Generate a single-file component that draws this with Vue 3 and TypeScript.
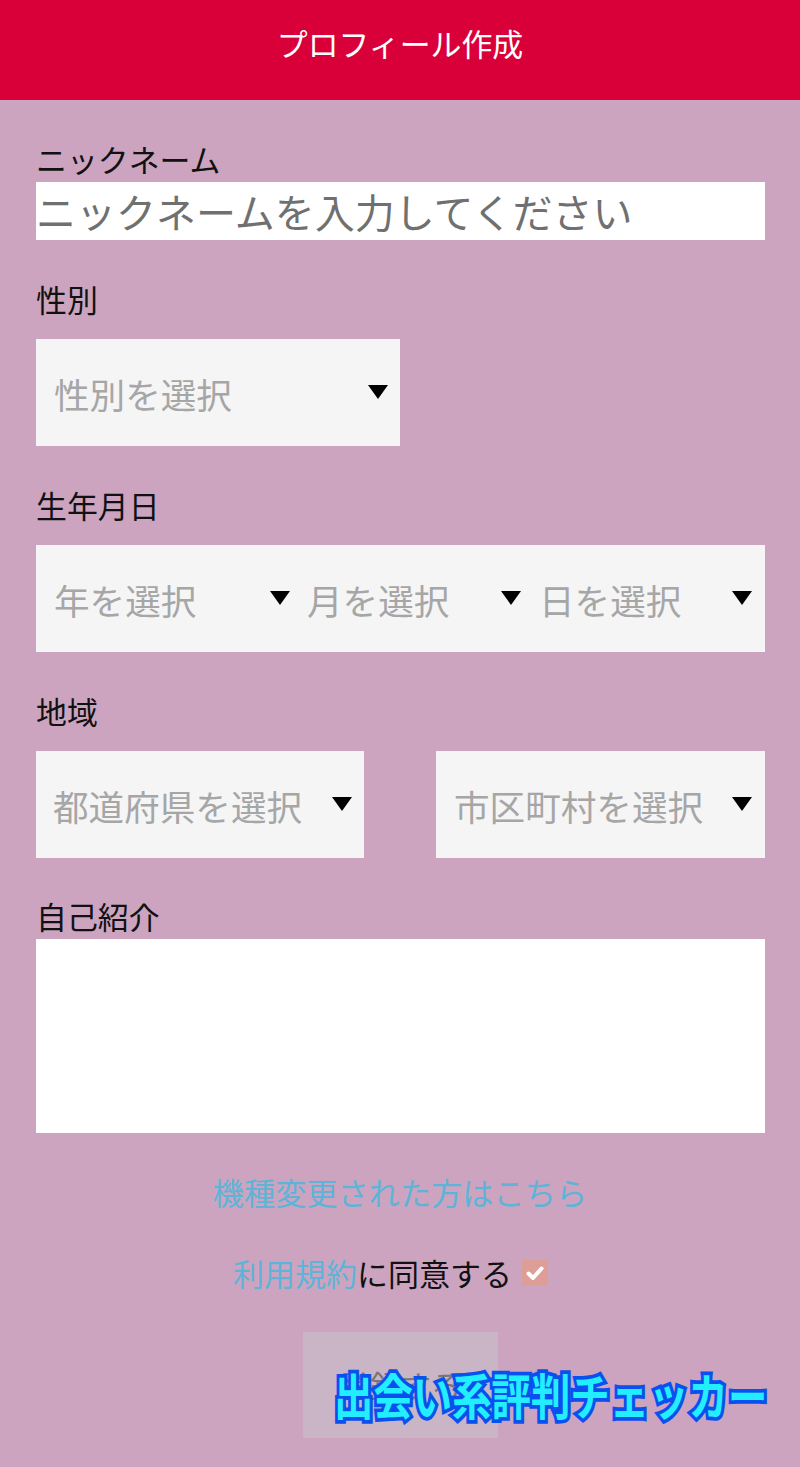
<script setup lang="ts">
const dateParts = [
  { text: '年を選択', cls: 'year' },
  { text: '月を選択', cls: 'month' },
  { text: '日を選択', cls: 'day' },
]
</script>

<template>
  <div class="page">
    <header class="bar">プロフィール作成</header>
    <main class="form">
      <section class="first">
        <div class="label">ニックネーム</div>
        <div class="input">ニックネームを入力してください</div>
      </section>
      <section>
        <div class="label gap">性別</div>
        <div class="select gender"><span>性別を選択</span><i class="arrow"></i></div>
      </section>
      <section>
        <div class="label gap">生年月日</div>
        <div class="date">
          <div v-for="p in dateParts" :key="p.cls" class="part" :class="p.cls">
            <span>{{ p.text }}</span><i class="arrow"></i>
          </div>
        </div>
      </section>
      <section>
        <div class="label gap">地域</div>
        <div class="region">
          <div class="select pref"><span>都道府県を選択</span><i class="arrow"></i></div>
          <div class="select city"><span>市区町村を選択</span><i class="arrow"></i></div>
        </div>
      </section>
      <section class="intro">
        <div class="label">自己紹介</div>
        <div class="textarea"></div>
      </section>
      <div class="link-row"><a class="link">機種変更された方はこちら</a></div>
      <div class="terms">
        <a class="link">利用規約</a><span>に同意する</span>
        <span class="check">
          <svg viewBox="0 0 26 26" width="26" height="26">
            <path d="M6.5 13.5 L11 18 L19.5 8.5" fill="none" stroke="#fff" stroke-width="4" stroke-linecap="round" stroke-linejoin="round" />
          </svg>
        </span>
      </div>
      <div class="submit-row"><button class="submit" type="button">登録する</button></div>
    </main>
    <div class="mark">出会い系評判チェッカー</div>
  </div>
</template>

<style>
html, body { margin: 0; padding: 0; }
</style>

<style scoped>
.page {
  position: relative;
  width: 800px;
  height: 1467px;
  overflow: hidden;
  background: #cca4bf;
  font-family: "Noto Sans CJK JP", "Noto Sans", sans-serif;
  color: #111;
}
.bar {
  height: 100px;
  padding-bottom: 16px;
  box-sizing: border-box;
  background: #d9003a;
  color: #fff;
  font-size: 30.9px;
  display: flex;
  align-items: center;
  justify-content: center;
}
.form { padding: 38px 35px 0 36px; }
section { margin-top: 38px; }
section.first { margin-top: 0; }
section.intro { margin-top: 37px; }
.label {
  height: 44px;
  line-height: 42px;
  font-size: 30.9px;
  white-space: nowrap;
}
.label.gap { margin-bottom: 17px; }
.input {
  height: 58px;
  line-height: 58px;
  background: #fff;
  color: #707070;
  font-size: 40px;
  white-space: nowrap;
}
.select, .part {
  height: 107px;
  display: flex;
  align-items: center;
  justify-content: space-between;
  box-sizing: border-box;
  color: #a6a6a6;
  font-size: 35.6px;
  background: #f5f5f6;
}
.select span, .part span { position: relative; top: 1px; white-space: nowrap; }
.arrow {
  display: block;
  width: 0;
  height: 0;
  margin-top: -1px;
  border-left: 10px solid transparent;
  border-right: 10px solid transparent;
  border-top: 14px solid #000;
}
.gender { width: 364px; padding: 0 12px 0 18px; }
.date { display: flex; width: 729px; background: #f5f5f6; }
.part { padding-right: 10px; }
.year { width: 264px; padding-left: 18px; }
.month { width: 231px; padding-left: 7px; }
.day { width: 234px; padding-left: 8px; padding-right: 13px; }
.region { display: flex; justify-content: space-between; width: 729px; }
.pref { width: 328px; padding: 0 12px 0 17px; }
.city { width: 329px; padding: 0 13px 0 18px; }
.textarea { height: 194px; background: #fff; }
.link { color: #5db4d8; }
.link-row {
  margin-top: 38px;
  height: 44px;
  line-height: 42px;
  text-align: center;
  font-size: 31.2px;
  padding-right: 1px;
}
.terms {
  margin-top: 37px;
  height: 44px;
  padding: 0 20px 3px 0;
  box-sizing: border-box;
  display: flex;
  align-items: center;
  justify-content: center;
  font-size: 31px;
  white-space: nowrap;
}
.check {
  width: 26px;
  height: 26px;
  margin-left: 10px;
  background: #dd9e97;
  display: block;
}
.check svg { display: block; }
.submit-row {
  margin-top: 36px;
  display: flex;
  justify-content: center;
}
.submit {
  width: 195px;
  height: 106px;
  border: 0;
  padding: 0;
  background: #c9b5c6;
  color: #777;
  font: inherit;
  font-size: 30.5px;
}
.mark {
  position: absolute;
  left: 334px;
  top: 1362px;
  font-size: 39.4px;
  line-height: 64px;
  font-weight: 700;
  white-space: nowrap;
  color: #22eeff;
  -webkit-text-stroke: 6px #0a50ee;
  paint-order: stroke fill;
  transform: scaleY(1.25);
}
</style>
